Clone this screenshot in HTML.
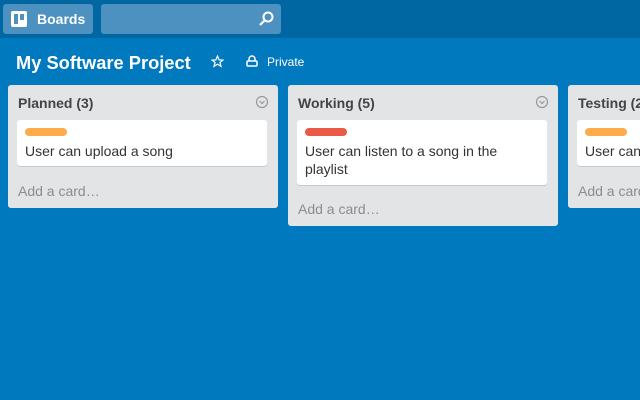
<!DOCTYPE html>
<html><head><style>
*{margin:0;padding:0;box-sizing:border-box}
body{width:640px;height:400px;overflow:hidden;background:#0079bf;font-family:"Liberation Sans",Arial,sans-serif;position:relative}
.hdr{position:absolute;left:0;top:0;width:640px;height:38px;background:#0067a3}
.btn{position:absolute;left:3px;top:4px;width:90px;height:30px;background:#4d91c0;border-radius:3px;color:#fff;font-weight:bold;font-size:14px}
.search{position:absolute;left:101px;top:4px;width:180px;height:30px;background:#4d91c0;border-radius:3px}
.title{position:absolute;left:16px;top:52px;color:#fff;font-weight:bold;font-size:18.3px}
.priv{position:absolute;left:267px;top:55px;color:#fff;font-size:12px}
.list{position:absolute;top:85px;width:270px;background:#e2e4e6;border-radius:3px}
.lt{position:absolute;left:10px;top:10px;font-weight:bold;font-size:14px;color:#444}
.card{position:absolute;left:9px;top:35px;width:250px;background:#fff;border-radius:3px;box-shadow:0 1px 0 #c4c9cc;font-size:14px;color:#333;line-height:18px;padding:22px 8px 6px 8px}
.lbl{position:absolute;left:8px;top:8px;width:42px;height:8px;border-radius:4px}
.add{position:absolute;left:10px;font-size:14px;color:#8c8c8c}
.chev{position:absolute;left:247px;top:10px}
</style></head><body>
<div class="hdr"></div>
<div class="btn">
<svg style="position:absolute;left:8px;top:7px" width="16" height="16"><rect x="0" y="0" width="16" height="16" rx="2" fill="#fff"/><rect x="3" y="3" width="4" height="10" fill="#4d91c0"/><rect x="9" y="3" width="4" height="6" fill="#4d91c0"/></svg>
<span style="position:absolute;left:34px;top:7px">Boards</span></div>
<div class="search"><svg style="position:absolute;left:157px;top:7px" width="16" height="16"><circle cx="10" cy="6" r="4.5" stroke="#fff" stroke-width="2" fill="none"/><line x1="7" y1="9" x2="2" y2="14" stroke="#fff" stroke-width="2.2"/></svg></div>
<div class="title">My Software Project</div>
<svg style="position:absolute;left:211px;top:55px" width="13" height="13" viewBox="0 0 24 24"><polygon points="12,2 15,9 22,9.5 16.5,14 18.5,21 12,17 5.5,21 7.5,14 2,9.5 9,9" fill="none" stroke="#fff" stroke-width="2.2"/></svg>
<svg style="position:absolute;left:246px;top:55px" width="12" height="12"><path d="M3 6V4a3 3 0 0 1 6 0v2" stroke="#fff" stroke-width="1.5" fill="none"/><rect x="1" y="6" width="10" height="5" rx="1" stroke="#fff" stroke-width="1.5" fill="none"/></svg>
<div class="priv">Private</div>

<div class="list" style="left:8px;height:123px"><div class="lt">Planned (3)</div>
<svg class="chev" width="14" height="14"><circle cx="7" cy="7" r="5.5" stroke="#999" stroke-width="1.2" fill="none"/><path d="M4.5 6l2.5 2.5L9.5 6" stroke="#999" stroke-width="1.2" fill="none"/></svg>
<div class="card" style="height:46px"><div class="lbl" style="background:#ffab4a"></div>User can upload a song</div>
<div class="add" style="top:98px">Add a card…</div></div>

<div class="list" style="left:288px;height:141px"><div class="lt">Working (5)</div>
<svg class="chev" width="14" height="14"><circle cx="7" cy="7" r="5.5" stroke="#999" stroke-width="1.2" fill="none"/><path d="M4.5 6l2.5 2.5L9.5 6" stroke="#999" stroke-width="1.2" fill="none"/></svg>
<div class="card" style="height:65px"><div class="lbl" style="background:#eb5a46"></div>User can listen to a song in the playlist</div>
<div class="add" style="top:116px">Add a card…</div></div>

<div class="list" style="left:568px;height:123px"><div class="lt">Testing (2)</div>
<div class="card" style="height:46px"><div class="lbl" style="background:#ffab4a"></div>User can</div>
<div class="add" style="top:98px">Add a card…</div></div>
</body></html>
